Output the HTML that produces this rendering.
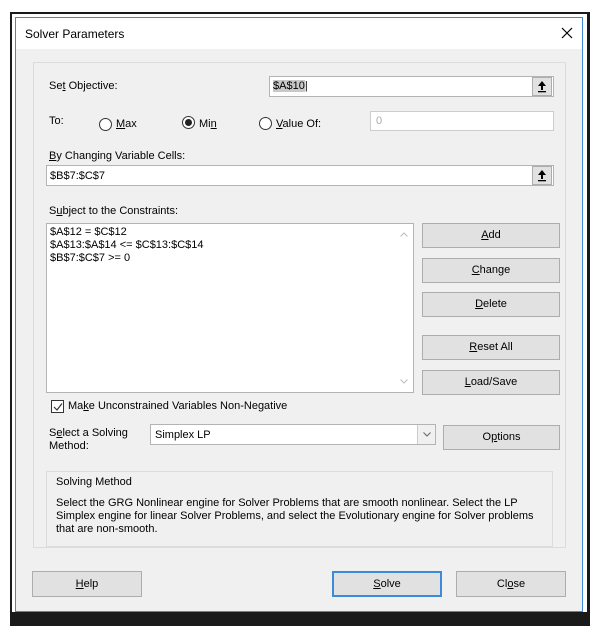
<!DOCTYPE html>
<html><head><meta charset="utf-8"><style>
*{box-sizing:border-box;margin:0;padding:0}
body{width:601px;height:642px;background:#fff;position:relative;overflow:hidden;font-family:"Liberation Sans",sans-serif;font-size:11px;color:#000}
.a{position:absolute}
.frame{left:10px;top:12px;width:580px;height:614px;background:#1a1a1a}
.sheet{left:12px;top:14px;width:575px;height:598px;background:#fff}
.dlg{left:15px;top:17px;width:568px;height:595px;background:#f0f0f0;border:1px solid #3c8ad8}
.title{left:0;top:0;width:566px;height:31px;background:#fff}
.panel{border:1px solid #dcdcdc}
.inp{background:#fff;border:1px solid #b4b4b4}
.btn{background:#e1e1e1;border:1px solid #adadad;text-align:center;line-height:23px}
.up{width:20px;height:19px;background:#e1e1e1;border:1px solid #adadad}
u{text-decoration:underline}
.rad{width:13px;height:13px;border:1px solid #333;border-radius:50%;background:#fff}
</style></head><body>
<div class="a frame"></div>
<div class="a sheet"></div>
<div class="a dlg">
 <div class="a title"></div>
 <div class="a" style="left:9px;top:9px;font-size:12px">Solver Parameters</div>
 <svg class="a" style="left:545px;top:9px" width="12" height="12"><path d="M1 1L11 11M11 1L1 11" stroke="#000" stroke-width="1.2"/></svg>
 <div class="a panel" style="left:17px;top:44px;width:533px;height:486px"></div>
 <div class="a" style="left:33px;top:62px">Se<u>t</u> Objective:</div>
 <div class="a inp" style="left:253px;top:58px;width:285px;height:21px;padding:3px 3px;font-size:11px"><span style="background:#c8c8c8">$A$10</span>|</div>
 <div class="a up" style="left:516px;top:59px"><svg width="18" height="17"><path d="M9 3L5 8H8V12H10V8H13Z" fill="#000"/><rect x="5" y="13" width="8" height="1.3" fill="#000"/></svg></div>
 <div class="a" style="left:33px;top:97px">To:</div>
 <div class="a rad" style="left:83px;top:100px"></div><div class="a" style="left:100px;top:100px"><u>M</u>ax</div>
 <div class="a rad" style="left:166px;top:98px"><div class="a" style="left:2px;top:2px;width:7px;height:7px;border-radius:50%;background:#222"></div></div><div class="a" style="left:183px;top:100px">Mi<u>n</u></div>
 <div class="a rad" style="left:243px;top:99px"></div><div class="a" style="left:260px;top:100px"><u>V</u>alue Of:</div>
 <div class="a inp" style="left:354px;top:93px;width:184px;height:20px;border-color:#ccc;padding:3px 5px;color:#aaa">0</div>
 <div class="a" style="left:33px;top:132px"><u>B</u>y Changing Variable Cells:</div>
 <div class="a inp" style="left:30px;top:147px;width:508px;height:21px;padding:4px 3px">$B$7:$C$7</div>
 <div class="a up" style="left:516px;top:148px"><svg width="18" height="17"><path d="M9 3L5 8H8V12H10V8H13Z" fill="#000"/><rect x="5" y="13" width="8" height="1.3" fill="#000"/></svg></div>
 <div class="a" style="left:33px;top:187px">S<u>u</u>bject to the Constraints:</div>
 <div class="a inp" style="left:30px;top:205px;width:368px;height:170px;padding:2px 3px;line-height:13px">$A$12 = $C$12<br>$A$13:$A$14 &lt;= $C$13:$C$14<br>$B$7:$C$7 &gt;= 0
  <svg class="a" style="right:5px;top:8px" width="8" height="5"><path d="M0.5 4.5L4 1L7.5 4.5" fill="none" stroke="#bbb"/></svg>
  <svg class="a" style="right:5px;bottom:8px" width="8" height="5"><path d="M0.5 0.5L4 4L7.5 0.5" fill="none" stroke="#bbb"/></svg></div>
 <div class="a btn" style="left:406px;top:205px;width:138px;height:25px"><u>A</u>dd</div>
 <div class="a btn" style="left:406px;top:240px;width:138px;height:25px"><u>C</u>hange</div>
 <div class="a btn" style="left:406px;top:274px;width:138px;height:25px"><u>D</u>elete</div>
 <div class="a btn" style="left:406px;top:317px;width:138px;height:25px"><u>R</u>eset All</div>
 <div class="a btn" style="left:406px;top:352px;width:138px;height:25px"><u>L</u>oad/Save</div>
 <div class="a" style="left:35px;top:382px;width:13px;height:13px;border:1px solid #333;background:#fff"><svg class="a" style="left:1px;top:1px" width="10" height="10"><path d="M1 5L4 8L9 1.5" fill="none" stroke="#333" stroke-width="1.2"/></svg></div>
 <div class="a" style="left:52px;top:382px">Ma<u>k</u>e Unconstrained Variables Non-Negative</div>
 <div class="a" style="left:33px;top:409px;line-height:13px">S<u>e</u>lect a Solving<br>Method:</div>
 <div class="a inp" style="left:134px;top:406px;width:286px;height:21px;padding:4px 4px">Simplex LP</div>
 <div class="a" style="left:401px;top:407px;width:18px;height:19px;background:#f0f0f0;border-left:1px solid #ccc"><svg class="a" style="left:5px;top:7px" width="8" height="5"><path d="M0.5 0.5L4 4L7.5 0.5" fill="none" stroke="#666"/></svg></div>
 <div class="a btn" style="left:427px;top:407px;width:117px;height:25px">O<u>p</u>tions</div>
 <div class="a panel" style="left:30px;top:453px;width:507px;height:76px"></div>
 <div class="a" style="left:40px;top:458px">Solving Method</div>
 <div class="a" style="left:40px;top:479px;width:495px;line-height:13px">Select the GRG Nonlinear engine for Solver Problems that are smooth nonlinear. Select the LP Simplex engine for linear Solver Problems, and select the Evolutionary engine for Solver problems that are non-smooth.</div>
 <div class="a btn" style="left:16px;top:553px;width:110px;height:26px;line-height:24px"><u>H</u>elp</div>
 <div class="a btn" style="left:316px;top:553px;width:110px;height:26px;line-height:22px;border:2px solid #3c8ad8"><u>S</u>olve</div>
 <div class="a btn" style="left:440px;top:553px;width:110px;height:26px;line-height:24px">Cl<u>o</u>se</div>
</div>
</body></html>
